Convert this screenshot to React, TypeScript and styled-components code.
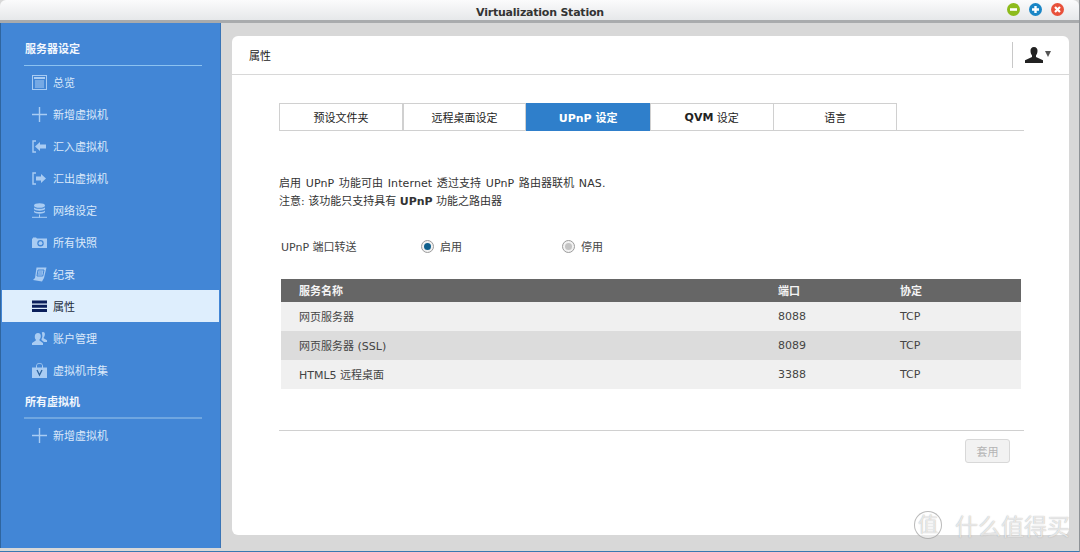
import React from "react";
import styled, { createGlobalStyle } from "styled-components";

const GlobalStyle = createGlobalStyle`
  html, body {
    margin: 0;
    padding: 0;
    height: 552px;
    overflow: hidden;
    background: #d8d8d8;
    font-family: "DejaVu Sans", "Noto Sans CJK SC", sans-serif;
  }
  * { box-sizing: border-box; }
`;

const Window = styled.div`
  position: relative;
  width: 1080px;
  height: 552px;
  display: flex;
  flex-direction: column;
  background: #d8d8d8;
  border-bottom: 1px solid #3a78b0;
  border-right: 1px solid #8f9397;
  overflow: hidden;
`;

const TitleBar = styled.div`
  height: 23px;
  flex: none;
  display: flex;
  align-items: center;
  justify-content: center;
  position: relative;
  border-radius: 6px 6px 0 0;
  background: linear-gradient(#fbfbfc, #e6e8ea);
  border-bottom: 3px solid #a9abad;
  font-size: 11px;
  font-weight: bold;
  letter-spacing: -0.22px;
  color: #333;
  padding: 4px 0 0 1px;
`;

const WinButtons = styled.div`
  position: absolute;
  top: 3px;
  right: 15px;
  display: flex;
  gap: 9px;
`;

const WinButton = styled.svg`
  width: 13px;
  height: 13px;
  display: block;
`;

const Body = styled.div`
  flex: 1;
  display: flex;
  min-height: 0;
  margin-bottom: 3px;
`;

const Sidebar = styled.div`
  width: 221px;
  flex: none;
  background: #4286d6;
  border-left: 1px solid #2f659f;
  border-right: 1px solid #3a74b6;
  padding-top: 15px;
  display: flex;
  flex-direction: column;
`;

const SideHeading = styled.div<{ $gap?: number }>`
  height: 22px;
  margin-top: ${(p) => p.$gap ?? 0}px;
  margin-left: 24px;
  color: #f2f7fd;
  font-size: 11px;
  font-weight: bold;
  line-height: 24px;
`;

const SideRule = styled.div<{ $soft?: boolean }>`
  height: ${(p) => (p.$soft ? 2 : 1)}px;
  margin: ${(p) => (p.$soft ? 4 : 5)}px 18px 0 23px;
  background: ${(p) => (p.$soft ? "#6fa6e0" : "#8cc2f0")};
`;

const SideList = styled.div`
  display: flex;
  flex-direction: column;
`;

const SideItem = styled.div<{ $active?: boolean }>`
  height: 32px;
  display: flex;
  align-items: center;
  gap: 6px;
  padding-left: ${(p) => (p.$active ? 30 : 31)}px;
  margin: 0 ${(p) => (p.$active ? 1 : 0)}px;
  font-size: 11px;
  color: ${(p) => (p.$active ? "#1c2a3a" : "#dbe9fa")};
  background: ${(p) => (p.$active ? "#deeefd" : "transparent")};
`;

const SideIcon = styled.svg`
  width: 15px;
  height: 15px;
  flex: none;
`;

const Main = styled.div`
  flex: 1;
  padding: 13px 10px 13px 11px;
  min-width: 0;
`;

const Card = styled.div`
  height: 100%;
  background: #fff;
  border-radius: 6px;
  display: flex;
  flex-direction: column;
`;

const CardHeader = styled.div`
  height: 39px;
  flex: none;
  display: flex;
  align-items: center;
  justify-content: space-between;
  padding: 0 18px 0 17px;
  border-bottom: 1px solid #d8d8d8;
  font-size: 11px;
  color: #222;
`;

const UserMenu = styled.div`
  height: 26px;
  display: flex;
  align-items: center;
  gap: 1px;
  padding-left: 11px;
  border-left: 1px solid #c8c8c8;
`;

const Caret = styled.div`
  width: 0;
  height: 0;
  margin-top: -2px;
  border-left: 3.5px solid transparent;
  border-right: 3.5px solid transparent;
  border-top: 6px solid #555;
`;

const Content = styled.div`
  flex: 1;
  padding: 28px 45px 0 47px;
  display: flex;
  flex-direction: column;
`;

const Tabs = styled.div`
  display: flex;
  height: 28px;
  border-bottom: 1px solid #d0d0d0;
`;

const Tab = styled.div<{ $active?: boolean }>`
  width: 123.8px;
  flex: none;
  height: 28px;
  display: flex;
  align-items: center;
  justify-content: center;
  font-size: 11px;
  font-weight: ${(p) => (p.$active ? "bold" : "normal")};
  color: ${(p) => (p.$active ? "#fff" : "#222")};
  background: ${(p) => (p.$active ? "#2f7fcb" : "#fff")};
  border: 1px solid ${(p) => (p.$active ? "#2f7fcb" : "#d0d0d0")};
  margin-right: -0.2px;
`;

const BoldTab = styled.span`
  font-weight: bold;
`;

const Notes = styled.div`
  margin-top: 44px;
  font-size: 11px;
  line-height: 18px;
  color: #333;
`;

const NoteLine = styled.div<{ $wide?: boolean }>`
  word-spacing: ${(p) => (p.$wide ? "0.9px" : "0")};
  letter-spacing: ${(p) => (p.$wide ? "0.01em" : "0")};
`;

const RadioRow = styled.div`
  margin-top: 26px;
  margin-left: 2px;
  height: 18px;
  display: flex;
  align-items: center;
  font-size: 11px;
  color: #444;
`;

const RadioLabel = styled.div`
  width: 141px;
`;

const RadioOption = styled.div`
  width: 141px;
  display: flex;
  align-items: center;
  gap: 7px;
`;

const Radio = styled.div<{ $on?: boolean }>`
  width: 13px;
  height: 13px;
  margin-left: -1px;
  margin-right: -1px;
  border-radius: 50%;
  border: 1px solid #9c9c9c;
  background: #f2f2f2;
  display: flex;
  align-items: center;
  justify-content: center;
  &::after {
    content: "";
    width: 7px;
    height: 7px;
    border-radius: 50%;
    background: ${(p) => (p.$on ? "#0f5f8c" : "#c4c4c4")};
  }
`;

const Table = styled.div`
  margin: 24px 3px 0 2px;
`;

const Row = styled.div`
  display: grid;
  grid-template-columns: 479px 122px 1fr;
  align-items: center;
  padding-left: 18px;
  font-size: 11px;
`;

const HeadRow = styled(Row)`
  height: 23px;
  background: #666;
  color: #f4f4f4;
  font-weight: bold;
  padding-bottom: 1px;
`;

const BodyRow = styled(Row)<{ $dark?: boolean }>`
  height: 29px;
  background: ${(p) => (p.$dark ? "#dcdcdc" : "#f0f0f0")};
  color: #444;
  padding-bottom: 1px;
`;

const Footer = styled.div`
  margin-top: 41px;
  border-top: 1px solid #d0d0d0;
  padding: 8px 14px 0 0;
  display: flex;
  justify-content: flex-end;
`;

const ApplyButton = styled.div`
  width: 45px;
  height: 24px;
  border: 1px solid #d8d8d8;
  border-radius: 3px;
  background: #f2f2f2;
  color: #b4b4b4;
  font-size: 11px;
  display: flex;
  align-items: center;
  justify-content: center;
`;

const Watermark = styled.div`
  position: absolute;
  left: 914px;
  bottom: 9px;
  display: flex;
  align-items: center;
  gap: 13px;
  color: rgba(255, 255, 255, 0.7);
  text-shadow: 0 0 1px rgba(110, 110, 110, 0.6);
  font-size: 23px;
  white-space: nowrap;
  width: 156px;
  overflow: hidden;
`;

const WatermarkBadge = styled.div`
  width: 28px;
  height: 28px;
  flex: none;
  border-radius: 50%;
  border: 1px solid rgba(140, 140, 140, 0.6);
  background: rgba(255, 255, 255, 0.45);
  font-size: 20px;
  line-height: 26px;
  text-align: center;
`;

const iconColor = "#a9ccf3";

const icons: Record<string, React.ReactNode> = {
  overview: (
    <>
      <rect x="0.5" y="0.5" width="14" height="14" fill="none" stroke={iconColor} />
      <rect x="2" y="2" width="11" height="2" fill={iconColor} />
      <path d="M3 6h9M3 8h9M3 10h9M3 12h9" stroke={iconColor} />
    </>
  ),
  plus: <path d="M0 7.5h15M7.5 0v15" stroke={iconColor} strokeWidth="1.4" />,
  import: (
    <>
      <path d="M4 2H1v11h3" fill="none" stroke={iconColor} strokeWidth="1.4" />
      <path d="M3 7.500 8 3v2.500h6v4H8V12z" fill={iconColor} />
    </>
  ),
  export: (
    <>
      <path d="M4 2H1v11h3" fill="none" stroke={iconColor} strokeWidth="1.4" />
      <path d="M14 7.500 9 3v2.500H4v4h5V12z" fill={iconColor} />
    </>
  ),
  network: (
    <>
      <ellipse cx="7.500" cy="2.500" rx="5.500" ry="2.300" fill={iconColor} />
      <path d="M2 4.200c1 2.200 10 2.200 11 0v1.800c-1 2.200-10 2.200-11 0zM2 7.400c1 2.200 10 2.200 11 0v1.600c-1 2.200-10 2.200-11 0z" fill={iconColor} />
      <path d="M0 14.300h15M7.500 11.500v3" stroke={iconColor} />
    </>
  ),
  camera: (
    <>
      <path d="M0 3.500h1V2.500h3l1 1h10V13H0z" fill={iconColor} />
      <circle cx="8.500" cy="8.200" r="3.200" fill="#4286d6" />
      <circle cx="8.500" cy="8.200" r="1.900" fill={iconColor} />
    </>
  ),
  log: (
    <>
      <path d="M4.500 0.500h10L12 11l-2 3.500L1 13l2-2z" fill={iconColor} />
      <path d="M6 3h6l-1.200 6H5z" fill="none" stroke="#4286d6" />
      <path d="M6.500 5h4M6 7h4" stroke="#4286d6" strokeWidth="0.800" />
    </>
  ),
  props: <path d="M0 1.500h15v3H0zM0 5.800h15v3H0zM0 10.100h15v3H0z" fill="#0a1f5c" />,
  users: (
    <>
      <path d="M6 2c2 0 3 1.500 2.800 3.500C8.700 7 8 8 7.500 8.500v1l3.500 2.500v2H0v-2l3.800-2.500v-1C3.200 8 2.700 7 2.800 5.500 2.800 3.500 4 2 6 2z" fill={iconColor} />
      <path d="M11 1c1.500 0 2 1.200 1.900 2.500-.1 1.500-.9 2.500-1.200 3v.8l3.300 2v1.700h-3L9.500 9v-1c.6-1 1-2.200.8-3.500C10.200 3 10 2 9.800 1.500 10.100 1.200 10.500 1 11 1z" fill={iconColor} />
    </>
  ),
  market: (
    <>
      <path d="M4.500 5V2.500C4.500 1.300 5.800 .5 7.500 .5s3 .8 3 2V5" fill="none" stroke={iconColor} />
      <path d="M0 4.500h15V15H0z" fill={iconColor} />
      <path d="M5 7l2.500 5L10 7" fill="none" stroke="#2f659f" strokeWidth="1.300" />
    </>
  ),
};

const menu = [
  { icon: "overview", label: "总览" },
  { icon: "plus", label: "新增虚拟机" },
  { icon: "import", label: "汇入虚拟机" },
  { icon: "export", label: "汇出虚拟机" },
  { icon: "network", label: "网络设定" },
  { icon: "camera", label: "所有快照" },
  { icon: "log", label: "纪录" },
  { icon: "props", label: "属性", active: true },
  { icon: "users", label: "账户管理" },
  { icon: "market", label: "虚拟机市集" },
];

const services = [
  { name: "网页服务器", port: "8088", protocol: "TCP" },
  { name: "网页服务器 (SSL)", port: "8089", protocol: "TCP" },
  { name: "HTML5 远程桌面", port: "3388", protocol: "TCP" },
];

const App: React.FC = () => {
  return (
    <Window>
      <GlobalStyle />
      <TitleBar>
        Virtualization Station
        <WinButtons>
          <WinButton viewBox="0 0 13 13">
            <circle cx="6.500" cy="6.500" r="6.500" fill="#8dbb1c" />
            <path d="M3 6.500h7" stroke="#fff" strokeWidth="2.600" />
          </WinButton>
          <WinButton viewBox="0 0 13 13">
            <circle cx="6.500" cy="6.500" r="6.500" fill="#1a86c6" />
            <path d="M3 6.500h7M6.500 3v7" stroke="#fff" strokeWidth="2.400" />
          </WinButton>
          <WinButton viewBox="0 0 13 13">
            <circle cx="6.500" cy="6.500" r="6.500" fill="#e8503a" />
            <path d="M4 4l5 5M9 4l-5 5" stroke="#fff" strokeWidth="2.200" />
          </WinButton>
        </WinButtons>
      </TitleBar>
      <Body>
        <Sidebar>
          <SideHeading>服务器设定</SideHeading>
          <SideRule />
          <SideList>
            {menu.map((item) => (
              <SideItem key={item.label} $active={item.active}>
                <SideIcon viewBox="0 0 15 15">{icons[item.icon]}</SideIcon>
                {item.label}
              </SideItem>
            ))}
          </SideList>
          <SideHeading $gap={5}>所有虚拟机</SideHeading>
          <SideRule $soft />
          <SideList>
            <SideItem>
              <SideIcon viewBox="0 0 15 15">{icons.plus}</SideIcon>
              新增虚拟机
            </SideItem>
          </SideList>
        </Sidebar>
        <Main>
          <Card>
            <CardHeader>
              属性
              <UserMenu>
                <svg width="20" height="16" viewBox="0 0 20 16">
                  <path
                    d="M10 0c2.500 0 3.500 1.800 3.500 3.800S12.800 7.500 12 8.500v1.500l7 3.300V16H1v-2.700l7-3.300V8.500C7.200 7.500 6.500 5.800 6.500 3.800S7.500 0 10 0z"
                    fill="#222"
                  />
                </svg>
                <Caret />
              </UserMenu>
            </CardHeader>
            <Content>
              <Tabs>
                <Tab>预设文件夹</Tab>
                <Tab>远程桌面设定</Tab>
                <Tab $active>UPnP 设定</Tab>
                <Tab>
                  <BoldTab>QVM</BoldTab>&nbsp;设定
                </Tab>
                <Tab>语言</Tab>
              </Tabs>
              <Notes>
                <NoteLine $wide>启用 UPnP 功能可由 Internet 透过支持 UPnP 路由器联机 NAS.</NoteLine>
                <NoteLine>
                  注意: 该功能只支持具有 <b>UPnP</b> 功能之路由器
                </NoteLine>
              </Notes>
              <RadioRow>
                <RadioLabel>UPnP 端口转送</RadioLabel>
                <RadioOption>
                  <Radio $on />
                  启用
                </RadioOption>
                <RadioOption>
                  <Radio />
                  停用
                </RadioOption>
              </RadioRow>
              <Table>
                <HeadRow>
                  <span>服务名称</span>
                  <span>端口</span>
                  <span>协定</span>
                </HeadRow>
                {services.map((s, i) => (
                  <BodyRow key={s.name} $dark={i === 1}>
                    <span>{s.name}</span>
                    <span>{s.port}</span>
                    <span>{s.protocol}</span>
                  </BodyRow>
                ))}
              </Table>
              <Footer>
                <ApplyButton>套用</ApplyButton>
              </Footer>
            </Content>
          </Card>
        </Main>
      </Body>
      <Watermark>
        <WatermarkBadge>值</WatermarkBadge>
        什么值得买
      </Watermark>
    </Window>
  );
};

export default App;
